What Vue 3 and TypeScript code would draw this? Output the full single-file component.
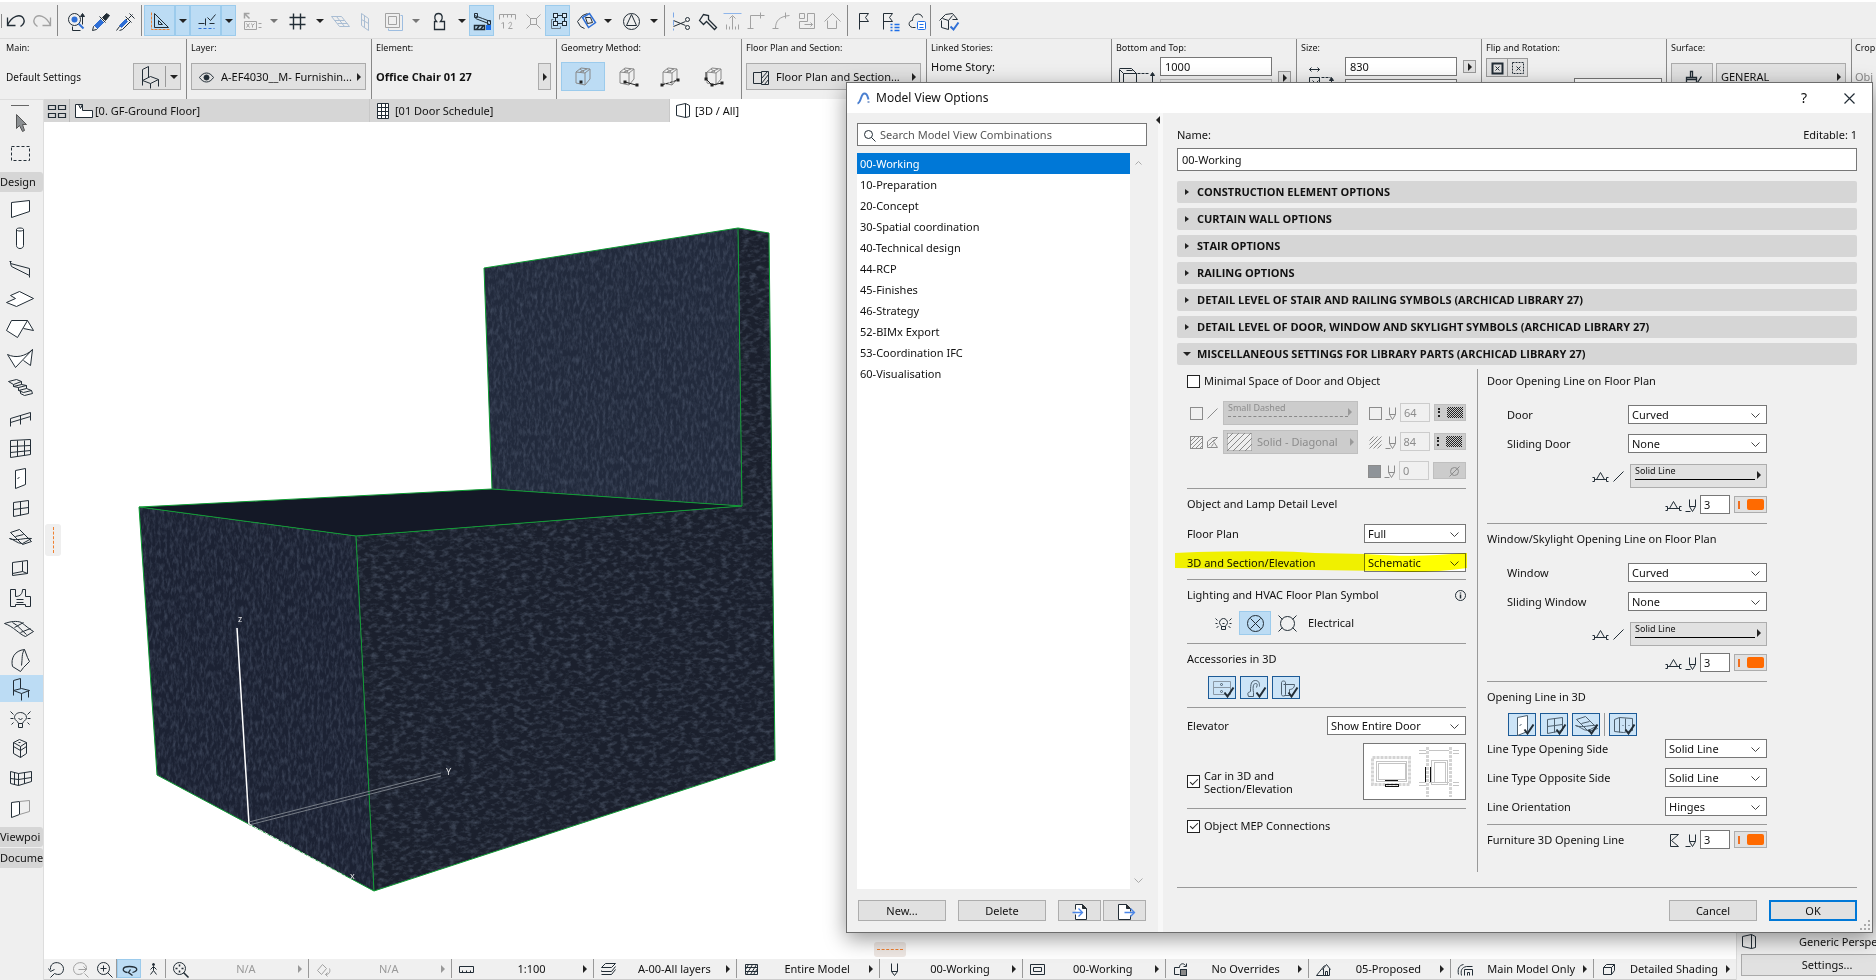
<script setup lang="ts">
import { h, ref } from 'vue'

const icons: Record<string, string> = {
  undo: '<path d="M-8-4v8h8M-8 4C-4-6 5-8 8-3c2 4 0 6-3 8" stroke-width="1.3"/>',
  redo: '<path d="M8-4v8h-8M8 4C4-6-5-8-8-3c-2 4 0 6 3 8" stroke-width="1.3"/>',
  find: '<circle cx="-1" cy="-2" r="6"/><circle cx="-1" cy="-2" r="3" fill="#2f6fd6" stroke="none"/><path d="M-3 5v4h8M7-6v9"/><path d="M3 2l5 5" stroke="#2f6fd6" stroke-width="2"/><path d="M5-5l2-3 2 3z" fill="currentColor"/>',
  dropper: '<path d="M-8 9l1-4 8-8 3 3-8 8z"/><path d="M-6 4l6-6 3 3-6 6z" fill="#2f6fd6" stroke="#2f6fd6"/><path d="M-1-5l6 6M2-4l4-4 3 2-4 5z" fill="currentColor"/>',
  syringe: '<path d="M-8 9l3-4 8-8 3 3-8 8-3 1M1-5l6 6M4-3l4-4M5-8l5 5"/><path d="M-5 4l6-6 2 2-6 6z" fill="#2f6fd6" stroke="#2f6fd6"/>',
  triangle: '<path d="M-6-8v14h14zM-2-1v4h4z"/><path d="M-9-9v17h18" stroke="#ee8033" stroke-dasharray="3 1"/>',
  snap: '<path d="M-8 2h6M3 2h5M-1-3v7M1-4l3 3 5-6"/><path d="M-8 7h16" stroke="#2f6fd6" stroke-dasharray="3 2"/>',
  xy: '<path d="M-8-3v-5h5M-8-8l5 5" stroke-width="1.5"/><path d="M-8 0h12v8h-12zM6 2h3M6 6h3M-6 2l3 4M-3 2l-3 4M-1 2l1 2 2-2M0 4v2"/>',
  grid: '<path d="M-4-8v16M3-8v16M-8-4h16M-8 3h16" stroke-width="1.4"/>',
  plane: '<path d="M-9-5h10l8 10h-10zM-6-1h10M-3 2h10M-4-5l8 10"/>',
  vplane: '<path d="M-4-8l7 5v12l-7-5zM-1-6v12M-4-2l7 4"/>',
  box: '<path d="M-8-8h14v14h-14zM-5-5h8v8h-8z"/><path d="M7-6h2v15h-14v-2" stroke="#9dbde0"/>',
  weight: '<path d="M-3 0c-3-3-2-8 2-8s5 5 2 8h4v8h-10v-8z" stroke-width="1.3"/>',
  trace: '<path d="M-8-6l8 3 8 3M-7-3l13 5M-8-8h3v4h-3zM5-1h3v4h-3z"/><path d="M-8 4h10v4h-10zM-6 8l3-4M-2 8l3-4" stroke-width="1.5"/><rect x="4" y="4" width="4" height="4" fill="#1e6fe8" stroke="#1e6fe8"/>',
  ruler: '<path d="M-8-2v-5h16v5M-4-7v3M0-7v3M4-7v3M-6 2l2-1v6M1 2c3-3 5 0 0 5h4"/>',
  cross: '<rect x="-3" y="-3" width="6" height="6"/><path d="M-7-7l4 4M7-7l-4 4M-7 7l4-4M7 7l-4-4"/>',
  group: '<path d="M-3-6h9v8h-9z"/><path d="M-7-2v9h9v-2M-7-2h2" stroke="#6c7a86"/><g fill="#dfeefa"><rect x="-5" y="-8" width="4" height="4"/><rect x="4" y="-8" width="4" height="4"/><rect x="4" y="0" width="4" height="4"/><rect x="-5" y="0" width="4" height="4"/></g>',
  cube3: '<path d="M-9 0l5-6 5-2M-9 0l3 5 4 2"/><path d="M-4-4l7-4 6 9-7 5z" stroke="#2f6fd6" stroke-width="1.5"/><path d="M-1-4l5 0 2 5-5 1z"/>',
  north: '<circle r="8"/><path d="M0-7l5 11h-10z"/>',
  scissors: '<path d="M-8-1l12 5M-8 5l12-5"/><circle cx="6" cy="-2" r="2"/><circle cx="6" cy="6" r="2"/><path d="M-8-9v18" stroke="#7da9e8" stroke-dasharray="5 3"/>',
  axe: '<path d="M-8-1l4-6 5 1 0 4 8 8-2 2-8-8-3 3z" stroke-width="1.3"/>',
  up: '<path d="M0-5v13M-3-3l3-3 3 3M-6 3v5M6 3v5M-3 5v3M3 5v3"/><path d="M-9-8h18" stroke="#8eb5ea"/>',
  corner: '<path d="M-7 7v-13h14M3-9v6M-10 7h6"/>',
  arc: '<path d="M-7 7c0-8 4-12 14-13M3-9v6M-10 7h6"/>',
  resize: '<path d="M-8-8h5v5h-5zM-8 0v7h15v-15h-7M0-8v8h-8M-3 3h8M3 1l2 2-2 2"/>',
  home: '<path d="M-8 0l8-8 8 8M-5-1v8h9v-8"/>',
  flag: '<path d="M-5 8v-16h9l-3 4 3 4h-9"/>',
  flaglist: '<path d="M-8 8v-16h9l-3 4 3 4h-9"/><path d="M-1 3h2M3 3h5M-1 6h2M3 6h5M-1 9h2M3 9h5" stroke="#1e6fe8" stroke-width="1.4"/>',
  cloud: '<path d="M-2 6h-3c-5-1-4-7 0-7 0-8 9-8 10-3"/><rect x="0" y="0" width="8" height="8" rx="1" stroke="#1e6fe8" fill="#fff"/><path d="M2 3h4M2 6h4" stroke="#1e6fe8"/>',
  checkhouse: '<path d="M-9-1l6-6 7-1 5 6-5 0M-7-1v7l7 2v-9l-6-2M0-1l4-5"/><path d="M2 5l3 3 5-7" stroke="#2f6fd6" stroke-width="2"/>',
  chair: '<path d="M-7 8v-16l6-3v11M-7 3l8 3 8-4-8-3-8 4M1 6v5M9 2v7"/>',
  eye: '<path d="M-7 0c4-6 10-6 14 0-4 6-10 6-14 0z"/><circle r="2.5" fill="currentColor"/>',
  geo1: '<path d="M-7-5l5-4 9 1 0 10-5 6-9-2zM-7-5l9 1 5-4M2-4v12M-3-8l4 3M4-8l-7 3"/>',
  fpsec: '<path d="M-8 6v-11h8v11zM0-6h7v13h-7z"/><path d="M0 1l6-7M0 6l7-9M3 7l4-5"/>',
  overview: '<path d="M-9-6h7v4h-7zM1-6h7v4h-7zM-9 2h7v4h-7zM1 2h7v4h-7z" stroke-width="1.2"/>',
  plan: '<path d="M-8-7h7v6h10v7h-17zM-5-7l2 4 2-4" fill="#fff"/>',
  schedule: '<path d="M-6-8h11v15h-11z" fill="#fff"/><path d="M-2-8v15M2-8v15M-6-4h11M-6 0h11M-6 4h11"/>',
  view3d: '<path d="M-7-6l9-2v14l-9-2zM2-8l4 2v11l-4 1"/>',
  arrowTool: '<path d="M-4-9v14l3-3 3 6 2-1-2-6h4z" fill="#8b8f92" stroke="#555"/>',
  marquee: '<path d="M-9-7h18v14h-18z" stroke-dasharray="3 2"/>',
  wall: '<path d="M-9-6l18-2v11l-18 6z" fill="#fff"/>',
  column: '<path d="M-4-9v16c0 4 7 4 7 0v-16c0-2-7-2-7 0c0 2 7 2 7 0" fill="#fff"/>',
  beam: '<path d="M-10-5l19 5v7l-18-9zM-10-5v-2M9 7v2M-11-7h2"/>',
  slab: '<path d="M-14 4l9-4-5-3 9-4 14 7-17 8z" fill="#fff"/>',
  roof: '<path d="M-9-8h16l-10 17-11-7zM7-8l6 10-10-2" fill="#fff"/>',
  shell: '<path d="M-13-4c8 4 18 2 25-5l-17 18zM12-9l-2 16-7-5" fill="#fff"/>',
  stair: '<path d="M-12-7l8-2 5 2-8 3zM1-7v3l-8 2v-2M1-4l5 1-8 2-5-1M6-3v3l-8 2v-3M6 0l5 2-8 2-5-2M11 2l1 3-8 2-4-2v-3"/>',
  railing: '<path d="M-10 8v-8l20-6v8M-10 4l20-6M0-3v9"/>',
  curtain: '<path d="M-10-8l20-1v15l-20 3zM-10-2l20-1M-10 4l20-2M-3-8v16M4-8v15"/>',
  door: '<path d="M-5-8l10-2v16l-10 4zM-3 0l2-1" fill="#fff"/>',
  window: '<path d="M-7-6l15-2v13l-15 3zM0-7v14M-7 1l15-2"/>',
  skylight: '<path d="M-10-6l9-3 12 12-9 3zM-11 0c8 3 14-1 22 0l-9 5c-6 0-8-4-13-5M-5-2l8-2"/>',
  opening: '<path d="M-8-6l15-2v13l-15 2zM2-7v10l5 2M-8 5l10-2"/>',
  zone: '<path d="M-10-9h5v7c5 0 7-3 7-7h3v7h5v10h-5v-2h-10v2h-5zM-4 1h7M-4 4h7"/>',
  mesh: '<path d="M-16-5c6-2 12-3 17-1 4 3 7 6 12 9l-8 5c-6-2-12-10-21-13zM-6-1l9-5M0 4l10-4M-8-6c6 3 9 8 14 12"/>',
  morph: '<path d="M-8 8c-2-8 2-16 12-17l3 8 2 4-6 6-3 4zM4-9c-3 4-2 9-3 16"/>',
  object: '<path d="M-7 7v-15l7-2v10M-7 2l8 3 8-3-8-2-8 2M1 5v7M8 2v7" fill="none"/>',
  lamp: '<path d="M-2 5c0-2-4-3-4-6s3-5 6-5 6 2 6 5-4 4-4 6zM-2 5v4h4v-4M-2 0l2 1 2-1M-10-7l3 3M10-7l-3 3M-10 0h3M10 0h-3M-9 6l2-2M9 6l-2-2"/>',
  bulb: '<path d="M-2 3c0-1-2-2-2-4s2-4 4-4 4 2 4 4-2 3-2 4zM-2 3v3h4v-3M-1 0h2M-8-5l2 2M8-5l-2 2M-8 0h2M8 0h-2M-7 4l2-1M7 4l-2-1"/>',
  equip: '<path d="M-7-6l6-3 7 3v11l-6 4-7-4zM-7-6l7 4 6-4M0-2v11M-7-2l7 4 6-4M-2-6h2"/>',
  cw2: '<path d="M-10-7l8 2 13-2v10l-13 4-8-2zM-2-5v12M4-6v11M-6-6v12M-10 0l8 1 13-2"/>',
  wallpair: '<path d="M-9-6l8-1v13l-8 3z" fill="#fff"/><path d="M-1-7l10-1v11l-10 3" stroke="#999"/>',
  orbit: '<path d="M-2 3c-6-1-6-6 2-6s10 4 3 6M1 0l-2 3 4 3" stroke-width="1.3"/>',
  walk: '<circle cx="0" cy="-5" r="1" fill="currentColor"/><path d="M0-3v4l-3 4M0 1l3 4M-3 0l3-3 3 3"/>',
  zoomprev: '<path d="M-6 0c-1-9 12-9 13-1 0 6-5 7-9 5M-8-1l2 3 4-2M-2 4l-4 4"/>',
  zoomnext: '<path d="M6 0c1-9-12-9-13-1 0 6 5 7 9 5M-2 0h8M3-3l3 3-3 3M4 4l4 4"/>',
  zoomin: '<circle cx="-1" cy="-1" r="6"/><path d="M3 3l5 5M-4-1h6M-1-4v6"/>',
  fit: '<circle cx="-1" cy="-1" r="6"/><path d="M3 3l5 5M-5-1h2M1-1h2M-1-5v2M-1 1v2" stroke-width="1.5"/>',
  tilt: '<path d="M-6 1l5-6 4 4-5 6zM2 5c4 0 5-3 4-6M2 5l2-2M2 5l2 2"/>',
  scale: '<path d="M-7-3h14v6h-14zM-4 3v-2M0 3v-2M4 3v-2"/>',
  layers: '<path d="M-7-2l4-4h10l-4 4zM-7 1l0 1h10l4-5M-7 5h10l4-5"/>',
  hatch: '<path d="M-6-5h12v10h-12zM-6-2h12M-6 2h12M-3-5l-3 5M1-5l-6 10M5-5l-6 10M6-1l-4 6"/>',
  penset: '<path d="M-3-6v8l3 4 3-4v-8M-3 2h6"/>',
  frame: '<path d="M-7-5h14v10h-14zM-4-2h8v4h-8z"/>',
  override: '<path d="M-6-2h5M-6-2v7h5"/><rect x="0" y="0" width="6" height="6" fill="#888"/><path d="M-1-2c0-4 4-5 6-2M6-6v3h-3"/>',
  reno: '<path d="M-1 0l4-5 4 5M0-1v7h6v-7M2 6v-4h2v4M-7 6h7M-7 6l8-10"/>',
  model: '<path d="M-7 5c-1-5 0-9 5-10M-4 6c-1-5 0-8 5-9h6M-1 6v-6h8v6M2 6v-3h2v3"/>',
  cube: '<path d="M-5-2l3-3h8l-3 3zM-5-2v7h8v-7M6-5v6l-3 4"/>',
  chev: '<path d="M-4-2l4 4 4-4"/>',
  chevUp: '<path d="M-3 2l3-3 3 3"/>',
  search: '<circle cx="-1" cy="-1" r="4"/><path d="M2 2l4 4"/>',
  importI: '<path d="M-5-2v-5h7l4 4v11h-11v-5" fill="#fff"/><path d="M2-7v4h4" fill="#333"/><path d="M-8 1h9M-2-3l4 4-4 4" stroke="#4a86e8" stroke-width="1.3"/>',
  exportI: '<path d="M5 4v4h-12v-15h8l4 4v3" fill="#fff"/><path d="M1-7v4h4" fill="#333"/><path d="M-1 1h10M5-3l4 4-4 4" stroke="#4a86e8" stroke-width="1.3"/>',
  diag: '<path d="M-5 5L5-5"/>',
  sq: '<rect x="-6" y="-6" width="12" height="12"/>',
  sqhatch: '<rect x="-6" y="-6" width="12" height="12"/><path d="M-6-1l5-5M-6 3l9-9M-5 6l11-11M-1 6l7-7M3 6l3-3"/>',
  hatchonly: '<path d="M-6-2l4-4M-6 2l8-8M-6 6l12-12M-2 6l8-8M2 6l4-4"/>',
  fillpen: '<path d="M-5 5v-6l5-4h5l-4 4 4 6zM-4 3l6-6M-1 4l2-3"/>',
  bg: '<rect x="-6" y="-6" width="12" height="12" fill="#8f9499"/>',
  none: '<circle r="4"/><path d="M-5 5L5-5"/>',
  pen: '<path d="M-6 6h5M-2-6v7l3 5 3-5v-7M-2 1h6"/>',
  line3: '<path d="M-8 1h2v4h-2M-6 3h12M8 1h-2v4h2M-4 3l4-7 4 7"/>',
  sideview: '<path d="M4-6h-8v12h8M4-6l-7 6 7 6"/>',
  info: '<circle r="5"/><path d="M0-1v4M0-3v1" stroke-width="1.5"/>',
  elec: '<circle r="8"/><path d="M-5-5L5 5M5-5L-5 5"/>',
  round: '<circle r="7"/><path d="M-9-8l4 4M9-8l-4 4M-9 8l4-4M9 8l-4-4"/>',
  drawer: '<path d="M-9-7h17v13h-17zM-9-1h17" stroke="#8a98a5"/><circle cx="-1" cy="-4" r="1"/><circle cx="-1" cy="3" r="1"/>',
  tap: '<path d="M-6 8c-2-5 1-4 2-5 0-8 1-11 5-11s4 4 4 6M-1 4c-1-6 0-9 2-9s2 1 1 4M-6 8h5v-4"/>',
  toilet: '<path d="M-5-6c0-2 4-2 4 0v12c0 2-4 2-4 0zM-3-4h11c0 4-3 5-5 5v6h-5"/>',
  cabinet: '<path d="M-9-6l5-2 13 1v12l-9 2-9-1zM-4-8v15M2-7v13M-1 0h1M5 0h1"/>',
  tick: '<path d="M2 4l3 4 6-9" stroke-width="2"/>',
  close: '<path d="M-5-5L5 5M5-5L-5 5" stroke-width="1.2"/>',
  logo: '<path d="M-6 5c4-1 3-10 7-10 3 0 3 3 4 6" stroke="#4a7fd0" stroke-width="2"/><path d="M5 3v1" stroke="#1d4fa0" stroke-width="2"/>',
  heightI: '<path d="M-17-9h12l5 5v16h-13v-16l-4-4v18M-13-4h13M-10-7h6"/><path d="M1-4h12" stroke-dasharray="3 1"/><path d="M16-3v14"/><path d="M14-2l2-3 2 3z" fill="currentColor"/>',
  sizeI: '<path d="M-12-8h10M-10-10l-2 2 2 2M-4-10l2 2-2 2M-12 0h10v12h-10zM-9 3l3 3 3-3"/><path d="M0 0h9" stroke-dasharray="3 1"/><path d="M10 2v10"/><path d="M8 3l2-3 2 3z" fill="currentColor"/>',
  flipA: '<rect x="-5" y="-5" width="10" height="10" stroke-width="2"/><path d="M-2-2l4 4M2-2l-4 4"/>',
  flipB: '<rect x="-6" y="-6" width="11" height="11" stroke-dasharray="2 1"/><path d="M-2-2l4 4M2-2l-4 4"/>',
  brush: '<path d="M-6 6v-6h10v6M-2 0v-6h2v6M-6 2h10M9-1l-6 9" stroke-width="1.3"/>',
}

const Ic = (p: { n: string; s?: string | number }) => {
  const s = Number(p.s ?? 20)
  return h('svg', {
    class: 'ic', width: s, height: s, viewBox: `${-s / 2 - 0.5} ${-s / 2 - 0.5} ${s} ${s}`,
    fill: 'none', stroke: 'currentColor', 'aria-hidden': 'true', innerHTML: icons[p.n] ?? '',
  })
}
Ic.props = ['n', 's']

type Tool = { n: string; w: number; k?: string }
const tools: Tool[] = [
  { n: 'undo', w: 26 }, { n: 'redo', w: 28, k: 'dim' }, { n: '|', w: 3 },
  { n: 'find', w: 31 }, { n: 'dropper', w: 20 }, { n: 'syringe', w: 28 }, { n: '|', w: 6 },
  { n: 'triangle', w: 31, k: 'on' }, { n: 'v', w: 15, k: 'on' }, { n: 'snap', w: 31, k: 'on' }, { n: 'v', w: 15, k: 'on' },
  { n: 'xy', w: 31, k: 'dim' }, { n: 'v', w: 14, k: 'dim' }, { n: 'grid', w: 32 }, { n: 'v', w: 14 },
  { n: 'plane', w: 26, k: 'pale' }, { n: 'vplane', w: 24, k: 'pale' }, { n: 'box', w: 32, k: 'dim' }, { n: 'v', w: 14, k: 'dim' },
  { n: 'weight', w: 32 }, { n: 'v', w: 14 }, { n: 'trace', w: 25, k: 'on' }, { n: 'ruler', w: 26, k: 'dim' }, { n: 'cross', w: 25, k: 'dim' },
  { n: 'group', w: 25, k: 'on' }, { n: 'cube3', w: 31 }, { n: 'v', w: 14 }, { n: 'north', w: 32 }, { n: 'v', w: 14 }, { n: '|', w: 7 },
  { n: 'scissors', w: 26 }, { n: 'axe', w: 25 }, { n: 'up', w: 25, k: 'dim' }, { n: 'corner', w: 25, k: 'dim' }, { n: 'arc', w: 25, k: 'dim' },
  { n: 'resize', w: 25, k: 'dim' }, { n: 'home', w: 25, k: 'dim' }, { n: '|', w: 7 },
  { n: 'flag', w: 26 }, { n: 'flaglist', w: 27 }, { n: 'cloud', w: 25 }, { n: '|', w: 3 }, { n: 'checkhouse', w: 32 },
]
const design = ['wall', 'column', 'beam', 'slab', 'roof', 'shell', 'stair', 'railing', 'curtain', 'door', 'window', 'skylight',
  'opening', 'zone', 'mesh', 'morph', 'object', 'lamp', 'equip', 'cw2', 'wallpair']
const status = [
  { i: 'fit', t: 'N/A', off: true }, { i: 'tilt', t: 'N/A', off: true, dim: true }, { i: 'scale', t: '1:100' },
  { i: 'layers', t: 'A-00-All layers' }, { i: 'hatch', t: 'Entire Model' }, { i: 'penset', t: '00-Working' },
  { i: 'frame', t: '00-Working' }, { i: 'override', t: 'No Overrides' }, { i: 'reno', t: '05-Proposed' },
  { i: 'model', t: 'Main Model Only' }, { i: 'cube', t: 'Detailed Shading' },
]
const combos = ['00-Working', '10-Preparation', '20-Concept', '30-Spatial coordination', '40-Technical design', '44-RCP',
  '45-Finishes', '46-Strategy', '52-BIMx Export', '53-Coordination IFC', '60-Visualisation']
const selected = ref('00-Working')
const sections = ['CONSTRUCTION ELEMENT OPTIONS', 'CURTAIN WALL OPTIONS', 'STAIR OPTIONS', 'RAILING OPTIONS',
  'DETAIL LEVEL OF STAIR AND RAILING SYMBOLS (ARCHICAD LIBRARY 27)',
  'DETAIL LEVEL OF DOOR, WINDOW AND SKYLIGHT SYMBOLS (ARCHICAD LIBRARY 27)',
  'MISCELLANEOUS SETTINGS FOR LIBRARY PARTS (ARCHICAD LIBRARY 27)']
const openings = [
  { title: 'Door Opening Line on Floor Plan', a: 'Door', b: 'Sliding Door' },
  { title: 'Window/Skylight Opening Line on Floor Plan', a: 'Window', b: 'Sliding Window' },
]
const lines = [['Line Type Opening Side', 'Solid Line'], ['Line Type Opposite Side', 'Solid Line'], ['Line Orientation', 'Hinges']]
const car = ref(true)
const mep = ref(true)
const minimal = ref(false)
const name = ref('00-Working')
</script>

<template>
  <div class="app">
    <div class="toolbar">
      <template v-for="(t, i) in tools" :key="i">
        <span v-if="t.n === '|'" class="tsep" :style="{ width: t.w + 'px' }"></span>
        <button v-else class="tool" :class="t.k" :style="{ width: t.w + 'px' }" :aria-label="t.n === 'v' ? 'more' : t.n">
          <i v-if="t.n === 'v'" class="down"></i><Ic v-else :n="t.n" />
        </button>
      </template>
    </div>

    <div class="infobox">
      <section class="cell first">
        <h6>Main:</h6>
        <div class="line"><span class="small">Default Settings</span>
          <button class="ibtn chairbtn" aria-label="Default object"><Ic n="chair" s="24" /><i class="vr"></i><i class="down"></i></button>
        </div>
      </section>
      <section class="cell">
        <h6>Layer:</h6>
        <div class="line"><button class="ibtn wide"><Ic n="eye" /><span>A-EF4030__M- Furnishin...</span><i class="right"></i></button></div>
      </section>
      <section class="cell">
        <h6>Element:</h6>
        <div class="line"><b>Office Chair 01 27</b><button class="ibtn slim" aria-label="Element"><i class="right"></i></button></div>
      </section>
      <section class="cell">
        <h6>Geometry Method:</h6>
        <div class="line geo">
          <button class="on" aria-label="Method 1"><svg width="26" height="26" viewBox="-13 -13 26 26" class="geoi"><g v-html="icons.geo1" /><rect x="-3" y="4" width="2" height="2" class="dot" /></svg></button>
          <button aria-label="Method 2"><svg width="26" height="26" viewBox="-13 -13 26 26" class="geoi"><g v-html="icons.geo1" /><path d="M-2 5l11 3" class="dk" /><rect x="-3" y="4" width="2" height="2" class="dot" /><rect x="9" y="7" width="2" height="2" class="dot" /></svg></button>
          <button aria-label="Method 3"><svg width="26" height="26" viewBox="-13 -13 26 26" class="geoi"><g v-html="icons.geo1" /><path d="M-8 8l16-5" class="dk dash" /><rect x="-9" y="7" width="2" height="2" class="dot" /><rect x="7" y="2" width="2" height="2" class="dot" /></svg></button>
          <button aria-label="Method 4"><svg width="26" height="26" viewBox="-13 -13 26 26" class="geoi"><g v-html="icons.geo1" /><path d="M-8-5v7l6 6 10-2" class="dk" /><rect x="-9" y="1" width="2" height="2" class="dot" /><rect x="-3" y="7" width="2" height="2" class="dot" /><rect x="7" y="5" width="2" height="2" class="dot" /></svg></button>
        </div>
      </section>
      <section class="cell">
        <h6>Floor Plan and Section:</h6>
        <div class="line"><button class="ibtn wide"><Ic n="fpsec" /><span>Floor Plan and Section...</span><i class="right"></i></button></div>
      </section>
      <section class="cell"><h6>Linked Stories:</h6><div class="mid">Home Story:</div></section>
      <section class="cell"><h6>Bottom and Top:</h6>
        <div class="pair"><Ic n="heightI" s="40" /><div class="stack"><input value="1000" aria-label="Top" /><input aria-label="Bottom" disabled /></div><button class="mini" aria-label="Anchor"><i class="right"></i></button></div>
      </section>
      <section class="cell"><h6>Size:</h6>
        <div class="pair size"><Ic n="sizeI" s="40" /><div class="stack"><input value="830" aria-label="Width" /><input aria-label="Depth" /></div><button class="mini top" aria-label="Width options"><i class="right"></i></button></div>
      </section>
      <section class="cell"><h6>Flip and Rotation:</h6>
        <div class="flip"><button aria-label="Flip"><Ic n="flipA" /></button><i class="vr"></i><button aria-label="Mirror"><Ic n="flipB" /></button></div>
        <input class="rot" aria-label="Angle" />
      </section>
      <section class="cell"><h6>Surface:</h6>
        <div class="line"><button class="ibtn brush" aria-label="Surface"><Ic n="brush" /></button><button class="ibtn wide gen"><span>GENERAL</span><i class="right"></i></button></div>
      </section>
      <section class="cell last"><h6>Crop</h6><div class="line grey">Obj</div></section>
    </div>

    <div class="main">
      <aside class="toolbox">
        <i class="grip"></i>
        <button class="tb" aria-label="Arrow"><Ic n="arrowTool" s="30" /></button>
        <button class="tb" aria-label="Marquee"><Ic n="marquee" s="30" /></button>
        <button class="group">Design</button>
        <button v-for="d in design" :key="d" class="tb" :class="{ current: d === 'object' }" :aria-label="d"><Ic :n="d" s="30" /></button>
        <button class="group g2">Viewpoi</button>
        <button class="group g3">Docume</button>
      </aside>

      <div class="center">
        <nav class="tabs">
          <button class="ov" aria-label="Overview"><Ic n="overview" /></button>
          <button class="tab"><Ic n="plan" />[0. GF-Ground Floor]</button>
          <button class="tab"><Ic n="schedule" />[01 Door Schedule]</button>
          <button class="tab active"><Ic n="view3d" />[3D / All]</button>
        </nav>
        <div class="viewport">
          <svg class="scene" width="800" height="836" viewBox="44 122 800 836" role="img" aria-label="3D view">
            <defs>
              <filter id="weave" x="0" y="0" width="100%" height="100%" color-interpolation-filters="sRGB">
                <feTurbulence type="fractalNoise" baseFrequency="0.34 0.14" numOctaves="3" seed="4" result="n" />
                <feColorMatrix in="n" type="matrix" values="0 0 0 0 .42  0 0 0 0 .47  0 0 0 0 .56  .8 0 0 0 -.32" result="m" />
                <feComposite in="m" in2="SourceGraphic" operator="in" result="c" />
                <feMerge><feMergeNode in="SourceGraphic" /><feMergeNode in="c" /></feMerge>
              </filter>
              <filter id="knit" x="0" y="0" width="100%" height="100%" color-interpolation-filters="sRGB">
                <feTurbulence type="fractalNoise" baseFrequency="0.14 0.24" numOctaves="3" seed="9" result="n" />
                <feColorMatrix in="n" type="matrix" values="0 0 0 0 .4  0 0 0 0 .45  0 0 0 0 .53  1.1 0 0 0 -.48" result="m" />
                <feComposite in="m" in2="SourceGraphic" operator="in" result="c" />
                <feMerge><feMergeNode in="SourceGraphic" /><feMergeNode in="c" /></feMerge>
              </filter>
            </defs>
            <polygon points="484,268 738,228 742,506 492,489" fill="#222a3c" filter="url(#weave)" />
            <polygon points="139,507 492,489 742,506 356,536" fill="#141826" />
            <polygon points="139,507 356,536 374,891 157,775" fill="#1c2233" filter="url(#weave)" />
            <polygon points="356,536 742,506 738,228 769,233 775,760 374,891" fill="#1b202d" filter="url(#knit)" />
            <g fill="none" stroke="#0e9c33" stroke-width="1">
              <path d="M484 268L738 228L742 506L492 489Z" />
              <path d="M738 228L769 233L775 760L374 891L157 775L139 507L356 536L742 506" />
              <path d="M139 507L492 489M356 536L374 891" />
            </g>
            <path d="M237 628L249 824" stroke="#fff" stroke-width="1.5" />
            <path d="M249 825L441 776M249 822L441 773" stroke="#777d86" />
            <path d="M249 824L345 876" stroke="#e8e8e8" stroke-dasharray="4 2" />
            <g fill="#e6e6e6" font-size="9"><text x="238" y="622">z</text><text x="446" y="775">Y</text><text x="350" y="879">x</text></g>
          </svg>
          <i class="dockv"></i>
          <i class="dockh"></i>
        </div>
        <footer class="status">
          <div class="nav">
            <button aria-label="Previous zoom"><Ic n="zoomprev" /></button><button class="dim" aria-label="Next zoom"><Ic n="zoomnext" /></button><button aria-label="Zoom in"><Ic n="zoomin" /></button><i class="vr"></i>
            <button class="on" aria-label="Orbit"><Ic n="orbit" /></button><button aria-label="Walk"><Ic n="walk" /></button>
          </div>
          <button v-for="(s, i) in status" :key="i" class="seg" :class="{ dim: s.dim, off: s.off }">
            <Ic :n="s.i" /><span>{{ s.t }}</span><i class="right"></i>
          </button>
        </footer>
      </div>

      <aside class="rightpanel">
        <div class="rp"><Ic n="view3d" s="16" /><span>Generic Perspe</span></div>
        <button class="settings">Settings...</button>
      </aside>
    </div>

    <div class="dialog" role="dialog" aria-label="Model View Options">
      <header class="title"><Ic n="logo" s="16" /><span>Model View Options</span><button class="help" aria-label="Help">?</button><button aria-label="Close"><Ic n="close" s="14" /></button></header>
      <div class="body">
        <div class="left">
          <label class="search"><Ic n="search" s="18" /><input placeholder="Search Model View Combinations" aria-label="Search Model View Combinations" /></label>
          <div class="listrow">
            <ul class="list">
              <li v-for="c in combos" :key="c"><button :class="{ chosen: c === selected }" @click="selected = c">{{ c }}</button></li>
            </ul>
            <div class="scroll"><Ic n="chevUp" s="10" /><Ic n="chev" s="10" /></div>
          </div>
          <div class="lbtns"><button class="btn">New...</button><button class="btn">Delete</button><span><button class="btn" aria-label="Import"><Ic n="importI" /></button><button class="btn" aria-label="Export"><Ic n="exportI" /></button></span></div>
        </div>
        <div class="splitter"><i class="leftarrow"></i></div>
        <div class="right-pane">
          <div class="namerow"><label for="mvname">Name:</label><span>Editable: 1</span></div>
          <input id="mvname" v-model="name" class="name" />
          <div class="sections">
            <button v-for="(s, i) in sections" :key="s" class="sec"><i :class="i === 6 ? 'down' : 'right'"></i>{{ s }}</button>
          </div>
          <div class="cols">
            <div class="col cl">
              <label class="chk h29"><input v-model="minimal" type="checkbox" />Minimal Space of Door and Object</label>
              <div class="pens dimrow">
                <Ic n="sq" s="14" /><Ic n="diag" s="14" />
                <button class="pick" disabled><span>Small Dashed</span><i class="dashes"></i><i class="right"></i></button>
                <Ic n="sq" s="14" /><Ic n="pen" s="14" /><input value="64" disabled aria-label="Contour pen" /><button class="sw" disabled aria-label="Contour colour"><i class="w"></i><i class="chk-p"></i></button>
              </div>
              <div class="pens dimrow">
                <Ic n="sqhatch" s="14" /><Ic n="fillpen" s="14" />
                <button class="pick fill" disabled><svg width="25" height="18" viewBox="0 0 25 18" class="fillsw"><rect x="0" y="0" width="25" height="18" /><path d="M0 6L6 0M0 12L12 0M0 18L18 0M6 18L24 0M12 18L25 5M18 18L25 11" /></svg><span>Solid - Diagonal</span><i class="right"></i></button>
                <Ic n="hatchonly" s="14" /><Ic n="pen" s="14" /><input value="84" disabled aria-label="Fill pen" /><button class="sw" disabled aria-label="Fill colour"><i class="w"></i><i class="chk-p"></i></button>
              </div>
              <div class="pens dimrow endrow">
                <Ic n="bg" s="14" /><Ic n="pen" s="14" /><input value="0" disabled aria-label="Background pen" /><button class="sw none" disabled aria-label="No background"><Ic n="none" s="12" /></button>
              </div>
              <hr />
              <div class="sub">Object and Lamp Detail Level</div>
              <div class="row"><label for="s1">Floor Plan</label><span class="pop w102"><select id="s1"><option>Full</option></select><Ic n="chev" s="14" /></span></div>
              <div class="row marked"><label for="s2">3D and Section/Elevation</label><span class="pop w102"><select id="s2"><option>Schematic</option></select><Ic n="chev" s="14" /></span>
                <svg class="marker" viewBox="0 0 292 23" preserveAspectRatio="none"><path d="M0 2L22 1Q90-1 140 2L190 3Q230 6 262 4L292 2V17Q250 23 210 20L140 19L0 17Z" /></svg>
              </div>
              <hr />
              <div class="sub spread"><span>Lighting and HVAC Floor Plan Symbol</span><Ic n="info" s="12" /></div>
              <div class="symbols"><button aria-label="Bulb"><Ic n="bulb" /></button><button class="on" aria-label="Electrical symbol"><Ic n="elec" /></button><button aria-label="Round"><Ic n="round" s="22" /></button><span>Electrical</span></div>
              <hr />
              <div class="sub">Accessories in 3D</div>
              <div class="toggles"><button v-for="n in ['drawer', 'tap', 'toilet']" :key="n" class="tg" :aria-label="n"><Ic :n="n" s="22" /><Ic n="tick" s="22" /></button></div>
              <hr />
              <div class="row elev"><label for="s3">Elevator</label><span class="pop w139"><select id="s3"><option>Show Entire Door</option></select><Ic n="chev" s="14" /></span></div>
              <div class="carrow">
                <label class="chk"><input v-model="car" type="checkbox" /><span>Car in 3D and<br />Section/Elevation</span></label>
                <svg class="thumb" width="103" height="57" viewBox="0 0 103 57" role="img" aria-label="Elevator preview">
                  <rect x="9.5" y="14.5" width="37" height="27" class="tk" /><rect x="13.5" y="18.5" width="30" height="20" /><rect x="15.5" y="20.5" width="27" height="16" />
                  <path d="M22 37.5h13" class="bk" /><rect x="22.5" y="41.5" width="13" height="2" class="bk" />
                  <path d="M64.5 4v50M87.500 4v50" class="tk" /><path d="M56 7.500h7M56 10.500h7M66 7.500h20M90 7.500h6M90 10.500h6M56 39.500h7M56 42.500h7M66 39.500h20M90 39.500h6M90 42.500h6" /><rect x="68.500" y="17.500" width="16" height="24" /><rect x="71.500" y="19.500" width="11" height="20" />
                  <path d="M62.500 24v15M67.500 24v15" class="bk" />
                </svg>
              </div>
              <hr />
              <label class="chk mep"><input v-model="mep" type="checkbox" />Object MEP Connections</label>
            </div>

            <div class="col cr">
              <template v-for="(o, i) in openings" :key="o.title">
                <div class="sub osub">{{ o.title }}</div>
                <div class="row ind"><label :for="'a' + i">{{ o.a }}</label><span class="pop w139"><select :id="'a' + i"><option>Curved</option></select><Ic n="chev" s="14" /></span></div>
                <div class="row ind"><label :for="'b' + i">{{ o.b }}</label><span class="pop w139"><select :id="'b' + i"><option>None</option></select><Ic n="chev" s="14" /></span></div>
                <div class="row pens endr lt"><Ic n="line3" s="18" /><Ic n="diag" s="14" /><button class="pick"><span>Solid Line</span><i class="solid"></i><i class="right"></i></button></div>
                <div class="row pens endr"><Ic n="line3" s="18" /><Ic n="pen" s="14" /><input value="3" aria-label="Line pen" /><button class="sw" aria-label="Line colour"><i class="o1"></i><i class="o2"></i></button></div>
                <hr class="ohr" />
              </template>
              <div class="sub osub3">Opening Line in 3D</div>
              <div class="toggles t2"><button v-for="n in ['door', 'window', 'skylight']" :key="n" class="tg" :aria-label="n"><Ic :n="n" s="22" /><Ic n="tick" s="22" /></button><i class="vr"></i><button class="tg" aria-label="cabinet"><Ic n="cabinet" s="22" /><Ic n="tick" s="22" /></button></div>
              <div v-for="(l, i) in lines" :key="l[0]" class="row"><label :for="'l' + i">{{ l[0] }}</label><span class="pop w102"><select :id="'l' + i"><option>{{ l[1] }}</option></select><Ic n="chev" s="14" /></span></div>
              <hr class="fhr" />
              <div class="row pens endr"><label class="grow" for="fp">Furniture 3D Opening Line</label><Ic n="sideview" s="16" /><Ic n="pen" s="14" /><input id="fp" value="3" /><button class="sw" aria-label="Furniture line colour"><i class="o1"></i><i class="o2"></i></button></div>
            </div>
          </div>
          <div class="actions"><button class="btn">Cancel</button><button class="btn ok">OK</button></div>
        </div>
      </div>
      <svg class="resize" width="10" height="10" viewBox="0 0 10 10"><path d="M8 1h2M4 5h2M8 5h2M0 9h2M4 9h2M8 9h2" /></svg>
    </div>
  </div>
</template>

<style>
body { margin: 0; overflow: hidden; }
</style>

<style scoped>
.app { position: relative; display: flex; flex-direction: column; height: 100vh; overflow: hidden; background: #efefef; color: #111; font: 11px/14px "Noto Sans", "Open Sans", sans-serif; }
.app *, .app *::before { box-sizing: border-box; }
button, input, select { font: inherit; color: inherit; margin: 0; padding: 0; border: 0; background: none; border-radius: 0; outline: 0; }
button { display: flex; align-items: center; justify-content: center; }
i { display: block; flex: none; }
.ic { display: block; flex: none; overflow: visible; color: #222d36; }
h6 { margin: 0; font-size: 9px; line-height: 12px; font-weight: 400; }
hr { width: 100%; margin: 0; border: 0; border-top: 1px solid #999; }
.down { border: 4px solid transparent; border-top-color: #222; border-bottom: 0; }
.right { border: 4px solid transparent; border-left-color: #222; border-right: 0; }
.vr { width: 1px; align-self: stretch; background: #999; }

.toolbar { display: flex; height: 38px; padding: 3px 0 2px 1px; border-top: 2px solid #fff; align-items: stretch; flex: none; }
.toolbar::before { content: ""; width: 1px; height: 14px; background: #888; align-self: center; }
.tsep { display: flex; justify-content: center; }
.tsep::before { content: ""; width: 1px; background: #888; }
.tool.on { background: #bcdcf4; border: 1px solid #9ccbec; }
.dim .ic { color: #a2a2a2; }
.pale .ic { color: #a9bdd3; }
.dim .down { border-top-color: #777; }

.infobox { display: flex; flex: none; height: 61px; border-top: 1px solid #dcdcdc; overflow: hidden; }
.cell { width: 185px; flex: none; padding: 3px 5px 0 4px; border-left: 1px solid #888; }
.cell.first { width: 186px; padding-left: 6px; border-left: 0; }
.cell.last { width: auto; flex: 1; min-width: 0; padding-right: 0; padding-left: 3px; }
.line { display: flex; align-items: center; height: 27px; margin-top: 9px; justify-content: space-between; }
.line b { font-family: "Open Sans", sans-serif; }
.small { font-size: 10px; }
.grey { color: #888; }
.ibtn { height: 27px; border: 1px solid #ababab; background: #e1e1e1; }
.chairbtn { width: 48px; gap: 4px; }
.chairbtn .vr { margin: 2px 0; }
.wide { flex: 1; padding: 0 4px; gap: 5px; justify-content: flex-start; white-space: nowrap; }
.wide .right { margin-left: auto; }
.slim { width: 13px; }
.brush { width: 42px; margin-right: 3px; flex: none; }
.geo { justify-content: flex-start; }
.geo button { width: 44px; height: 29px; }
.geo .on { background: #bcdcf4; border: 1px solid #9ccbec; }
.geoi { fill: none; stroke: #888; overflow: visible; }
.geoi .dot { fill: #222; stroke: #222; }
.geoi .dk { stroke: #222; }
.geoi .dash { stroke-dasharray: 3 1; }
.mid { margin-top: 5px; line-height: 16px; }
.pair { display: flex; margin-top: 3px; align-items: flex-start; }
.pair > .ic { width: 40px; margin-right: 4px; }
.pair .stack { display: grid; gap: 3px; width: 112px; }
.pair input { width: 100%; height: 19px; border: 1px solid #777; background: #fff; padding: 0 4px; }
.pair input:disabled { background: #efefef; border-color: #bbb; }
.mini { width: 13px; height: 13px; border: 1px solid #999; background: #e1e1e1; margin: 14px 0 0 6px; }
.mini.top { margin-top: 3px; }
.flip { display: flex; width: 42px; height: 19px; margin-top: 4px; border: 1px solid #999; background: #e1e1e1; align-items: center; }
.flip button { flex: 1; }
.rot { display: block; width: 88px; height: 19px; margin: 1px 0 0 88px; border: 1px solid #777; background: #fff; }

.main { display: flex; flex: 1; min-height: 0; }
.toolbox { width: 44px; flex: none; padding-top: 5px; border-right: 1px solid #ddd; overflow: hidden; border-top: 1px solid #ddd; }
.grip { width: 18px; height: 1px; margin: 0 0 2px 11px; background: #666; }
.tb { width: 43px; height: 30px; padding-right: 3px; }
.tb.current { background: linear-gradient(#bcdcf4, #bcdcf4) center / 100% 27px no-repeat; }
.group { width: 43px; height: 20px; margin: 4px 0 1px; justify-content: flex-start; background: #d6d6d6; border-radius: 0 3px 3px 0; white-space: nowrap; overflow: hidden; }
.g3 { margin-top: 1px; }
.center { display: flex; flex-direction: column; flex: 1; min-width: 0; }
.tabs { display: flex; height: 23px; flex: none; background: #d6d6d6; }
.ov { width: 26px; border-right: 1px solid #bbb; }
.tab { width: 300px; justify-content: flex-start; padding-left: 3px; gap: 2px; border-right: 1px solid #c8c8c8; }
.tab.active { flex: 1; background: #fff; border: 0; }
.viewport { position: relative; flex: 1; min-height: 0; background: #fff; overflow: hidden; }
.scene { display: block; }
.dockv { position: absolute; left: 1px; top: 402px; width: 16px; height: 32px; background: #efefef; border-radius: 3px; }
.dockv::before { content: ""; display: block; margin: 3px 0 0 8px; height: 26px; border-left: 1px dashed #f08030; }
.dockh { position: absolute; left: 830px; bottom: 2px; width: 32px; height: 15px; background: #efe8e4; border-radius: 3px; }
.dockh::before { content: ""; display: block; margin: 7px 3px 0; border-top: 1px dashed #f08030; }
.status { display: flex; height: 21px; padding-bottom: 1px; flex: none; background: #f0f0f0; border-bottom: 1px solid #ccc; }
.nav { display: flex; width: 121px; flex: none; }
.nav button { width: 24px; }
.nav .on { background: #bcdcf4; border: 1px solid #9ccbec; }
.seg { flex: 1 1 0; min-width: 0; border-left: 1px solid #999; padding: 0 6px 0 4px; }
.seg span { flex: 1; padding-left: 4px; text-align: center; white-space: nowrap; }
.seg.off { color: #999; }
.seg.off .right { border-left-color: #999; }
.rightpanel { width: 140px; flex: none; display: flex; flex-direction: column; justify-content: flex-end; padding: 0 0 4px 4px; overflow: hidden; border-left: 1px solid #ddd; }
.rp { display: flex; align-items: center; height: 25px; gap: 42px; white-space: nowrap; }
.settings { height: 22px; width: 172px; border: 1px solid #aaa; background: #e1e1e1; }

.dialog { position: absolute; left: 846px; right: 3px; top: 82px; bottom: 47px; display: flex; flex-direction: column; border: 1px solid #6d6d6d; background: #f0f0f0; box-shadow: 0 6px 20px rgba(0, 0, 0, .4); }
.title { display: flex; align-items: center; height: 30px; flex: none; padding: 0 16px 0 8px; gap: 5px; background: #fff; font-size: 12px; }
.title .help { margin-left: auto; margin-right: 30px; font-size: 14px; }
.body { display: flex; flex: 1; min-height: 0; }
.left { width: 311px; flex: none; padding: 10px 11px 11px 10px; display: flex; flex-direction: column; }
.search { display: flex; align-items: center; height: 23px; flex: none; padding-left: 2px; border: 1px solid #777; background: #fff; }
.search input { flex: 1; margin-left: 2px; }
.search input::placeholder { color: #555; opacity: 1; }
.listrow { display: flex; flex: 1; margin-top: 7px; min-height: 0; }
.list { flex: 1; margin: 0; padding: 0; list-style: none; background: #fff; }
.list button { width: 100%; height: 21px; padding-left: 3px; justify-content: flex-start; }
.list .chosen { background: #0078d7; color: #fff; }
.scroll { display: flex; flex-direction: column; justify-content: space-between; width: 17px; padding: 4px 0 4px 3px; }
.scroll .ic { color: #aaa; }
.lbtns { display: flex; justify-content: space-between; margin: 11px 1px 0; flex: none; }
.lbtns span { display: flex; gap: 2px; }
.lbtns span .btn { width: 43px; }
.btn { width: 88px; height: 21px; border: 1px solid #adadad; background: #e1e1e1; }
.splitter { width: 5px; flex: none; background: #f8f8f8; }
.leftarrow { width: 4px; margin: 3px 0 0 -2px; border: 4px solid transparent; border-right-color: #222; border-left: 0; }
.right-pane { flex: 1; min-width: 0; display: flex; flex-direction: column; padding: 14px 15px 11px 14px; }
.namerow { display: flex; justify-content: space-between; height: 16px; flex: none; line-height: 16px; }
.name { height: 23px; flex: none; margin-top: 5px; padding: 0 4px; border: 1px solid #777; background: #fff; }
.sections { display: grid; gap: 5px; margin-top: 10px; flex: none; }
.sec { height: 22px; justify-content: flex-start; padding-left: 6px; gap: 6px; background: #d6d6d6; border-radius: 2px; font-weight: 700; font-family: "Open Sans", sans-serif; }
.sec .right { margin: 0 2px; border-width: 3px; border-right: 0; border-left-width: 4px; }
.cols { display: flex; flex: 1; min-height: 0; padding: 4px 0 15px; border-bottom: 1px solid #999; }
.col { display: flex; flex-direction: column; }
.cl { width: 301px; flex: none; padding: 0 11px 0 10px; border-right: 1px solid #999; }
.cr { width: 289px; padding-left: 9px; }
.sub { display: flex; align-items: center; height: 30px; flex: none; }
.spread { justify-content: space-between; }
.chk { display: flex; align-items: center; gap: 4px; }
.chk.h29 { height: 24px; margin-bottom: 5px; }
.chk input { appearance: none; width: 13px; height: 13px; flex: none; border: 1px solid #222; background: #fff; display: grid; place-items: center; }
.chk input:checked::before { content: ""; width: 8px; height: 4px; border: solid #222; border-width: 0 0 1px 1px; transform: translateY(-1px) rotate(-45deg); }
.pens { display: flex; align-items: center; height: 29px; flex: none; gap: 2px; }
.dimrow { padding-left: 2px; color: #8c8c8c; }
.dimrow .ic { color: #8c8c8c; }
.pens input { width: 30px; height: 19px; border: 1px solid #777; background: #fff; padding: 0 3px; }
.dimrow input { border-color: #ccc; background: #f0f0f0; color: #8c8c8c; }
.sw { width: 33px; height: 17px; margin-left: 2px; border: 1px solid #adadad; background: #e1e1e1; gap: 7px; }
.dimrow .sw { background: #ccc; border-color: #bfbfbf; color: #999; }
.sw.none { padding-left: 9px; }
.o1 { width: 2px; height: 8px; background: #f07020; }
.o2 { width: 17px; height: 11px; background: #ff6a00; border-radius: 2px; }
.w { width: 2px; height: 9px; border-left: 2px dotted #222; }
.chk-p { width: 16px; height: 11px; background: repeating-conic-gradient(#222 0 25%, #ccc 0 50%) 0 0 / 2px 2px; }
.pick { display: grid; grid-template-columns: 1fr 6px; width: 137px; height: 24px; padding: 0 3px 5px 4px; border: 1px solid #adadad; background: #e1e1e1; text-align: left; align-items: center; font-size: 9px; line-height: 10px; justify-content: stretch; }
.pick .right { grid-row: 1 / 3; grid-column: 2; margin-top: 4px; }
.dimrow .pick { background: #ccc; border-color: #bfbfbf; color: #8c8c8c; margin: 0 8px 0 2px; }
.dimrow .pick .right { border-left-color: #999; }
.solid { border-top: 1px solid #000; width: 120px; }
.dashes { border-top: 1px dashed #888; width: 120px; }
.dimrow .fill { display: flex; gap: 5px; padding: 0 3px; font-size: 11px; }
.dimrow .fill .right { margin: 0 0 0 auto; }
.fillsw { fill: #eee; stroke: #888; flex: none; }
.fillsw path { fill: none; }
.endrow { justify-content: flex-end; margin-bottom: 3px; }
.row { display: flex; align-items: center; justify-content: space-between; height: 29px; flex: none; }
.pop { display: grid; grid-template-columns: 1fr 18px; align-items: center; height: 19px; border: 1px solid #777; background: #fff; }
.pop select { grid-area: 1 / 1 / 2 / 3; appearance: none; width: 100%; height: 17px; padding-left: 3px; }
.pop .ic { grid-area: 1 / 2; pointer-events: none; color: #444; }
.w102 { width: 102px; }
.w139 { width: 139px; }
.row + hr { margin-top: 2px; }
.marked { position: relative; }
.marker { position: absolute; left: -12px; top: 3px; width: 292px; height: 23px; fill: #ffff00; mix-blend-mode: multiply; pointer-events: none; }
.symbols { display: flex; align-items: center; height: 24px; margin: 1px 0 8px; padding-left: 20px; flex: none; }
.symbols button { width: 32px; height: 24px; }
.symbols .on { background: #bcdcf4; border: 1px solid #9ccbec; }
.symbols span { margin-left: 5px; }
.toggles { display: flex; gap: 4px; height: 23px; margin: 2px 0 8px 21px; flex: none; }
.tg { display: grid; place-items: center; width: 28px; height: 23px; border: 1px solid #1c5a96; background: #cce4f7; }
.tg .ic { grid-area: 1 / 1; }
.tg .ic:first-child { color: #4d5f6e; }
.toggles.t2 { margin-top: 4px; margin-bottom: -2px; }
.t2 .vr { margin: 0; }
.elev { height: 35px; }
.carrow { display: flex; justify-content: space-between; align-items: center; height: 57px; flex: none; margin-bottom: 8px; }
.carrow .chk { margin-top: 20px; line-height: 13px; }
.thumb { flex: none; fill: none; stroke: #c4c4c4; background: #fff; outline: 1px solid #777; outline-offset: -1px; }
.thumb .tk { stroke: #d4d4d4; stroke-width: 3; stroke-dasharray: 3 1; }
.thumb .bk { stroke: #111; }
.mep { height: 34px; }
.osub { height: 24px; margin-bottom: 7px; }
.osub3 { height: 24px; }
.ind label { margin-left: 20px; }
.endr { justify-content: flex-end; }
.lt { margin-top: 3px; }
.lt .ic:nth-child(2) { margin-right: 3px; }
.row + .ohr { margin: 4px 0 3px; }
.row + .fhr { margin-top: 3px; }
.grow { flex: 1; }
.actions { display: flex; justify-content: flex-end; gap: 12px; margin: 12px 0 0; flex: none; }
.actions .btn { width: 88px; }
.actions .ok { border: 2px solid #0078d7; }
.resize { position: absolute; right: 2px; bottom: 2px; stroke: #aaa; stroke-width: 2; }
</style>
